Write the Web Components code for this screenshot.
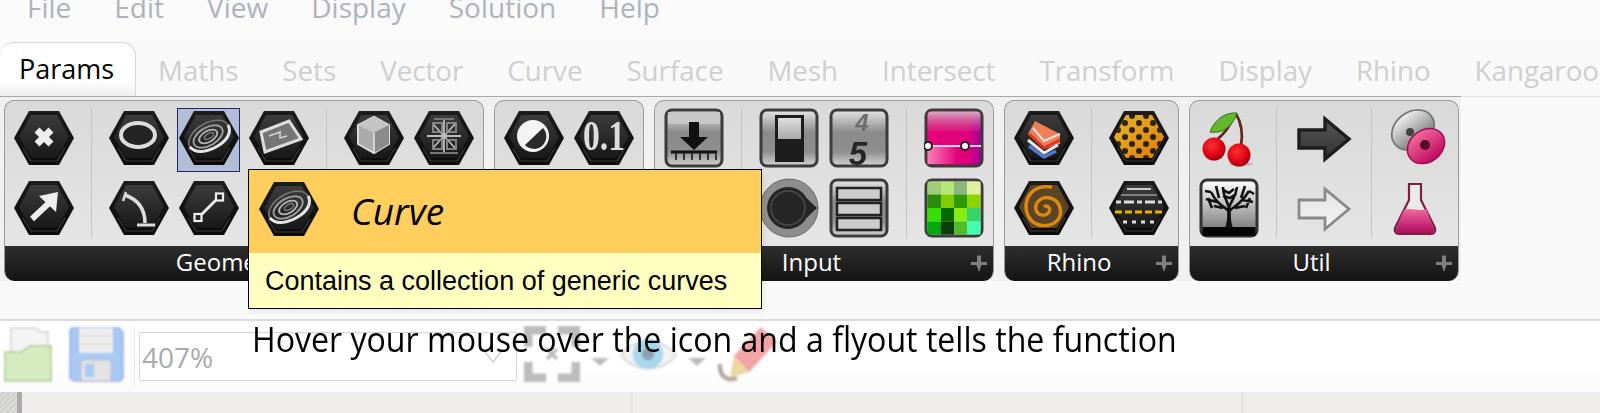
<!DOCTYPE html>
<html>
<head>
<meta charset="utf-8">
<title>Params ribbon</title>
<style>
  html, body { margin: 0; padding: 0; }
  body { width: 1600px; height: 413px; overflow: hidden; background: #f9f9f9; font-family: "Open Sans", "Liberation Sans", sans-serif; position: relative; }
</style>
</head>
<body>
<gh-menu></gh-menu>
<gh-tabs></gh-tabs>
<gh-ribbon>
  <gh-panel label="Geometry">
    <gh-group><gh-icon kind="cross"></gh-icon><gh-icon kind="arrow"></gh-icon></gh-group>
    <gh-group cols="3"><gh-icon kind="circle"></gh-icon><gh-icon kind="curve" selected></gh-icon><gh-icon kind="surface"></gh-icon><gh-icon kind="arc"></gh-icon><gh-icon kind="line"></gh-icon><gh-icon kind="blank"></gh-icon></gh-group>
    <gh-group cols="2"><gh-icon kind="cube"></gh-icon><gh-icon kind="mesh"></gh-icon></gh-group>
  </gh-panel>
  <gh-panel>
    <gh-group cols="2"><gh-icon kind="dial"></gh-icon><gh-icon kind="number"></gh-icon></gh-group>
  </gh-panel>
  <gh-panel label="Input">
    <gh-group><gh-icon kind="panel"></gh-icon></gh-group>
    <gh-group cols="2"><gh-icon kind="toggle"></gh-icon><gh-icon kind="digits"></gh-icon><gh-icon kind="knob"></gh-icon><gh-icon kind="list"></gh-icon></gh-group>
    <gh-group><gh-icon kind="gradient"></gh-icon><gh-icon kind="swatch"></gh-icon></gh-group>
  </gh-panel>
  <gh-panel label="Rhino">
    <gh-group><gh-icon kind="layers"></gh-icon><gh-icon kind="swirl"></gh-icon></gh-group>
    <gh-group><gh-icon kind="lattice"></gh-icon><gh-icon kind="dashes"></gh-icon></gh-group>
  </gh-panel>
  <gh-panel label="Util">
    <gh-group><gh-icon kind="cherry"></gh-icon><gh-icon kind="tree"></gh-icon></gh-group>
    <gh-group><gh-icon kind="darrow"></gh-icon><gh-icon kind="larrow"></gh-icon></gh-group>
    <gh-group><gh-icon kind="cell"></gh-icon><gh-icon kind="flask"></gh-icon></gh-group>
  </gh-panel>
</gh-ribbon>
<gh-toolbar></gh-toolbar>
<gh-canvas></gh-canvas>
<gh-tooltip title="Curve" text="Contains a collection of generic curves" kind="curve"></gh-tooltip>
<gh-caption>Hover your mouse over the icon and a flyout tells the function</gh-caption>

<script>
const hexBase = `
  <polygon points="0,30 15,3 45,3 60,30 45,57 15,57" fill="url(#hx)"/>
  <polygon points="5,29 17,7 43,7 55,29 43,50 17,50" fill="url(#hi)"/>
  <path d="M9 40L17 53H43L51 40" fill="none" stroke="#3c3c3c" stroke-width="1.2"/>`;
const boxBase = `
  <rect x="2" y="2" width="56" height="56" rx="6" fill="url(#bx)" stroke="#3c3c3c" stroke-width="3"/>`;

// glyphs are drawn on a 60x60 box; "hex" ones sit on the dark hexagon
const glyphs = {
  blank: '',
  cross: hexBase + '<path d="M23 22L37 36M37 22L23 36" stroke="#eee" stroke-width="7"/>',
  arrow: hexBase + '<path d="M18 41L35 25" stroke="#eee" stroke-width="6"/><polygon points="44,14 42,34 25,18" fill="#eee"/>',
  circle: hexBase + '<ellipse cx="29" cy="27" rx="17" ry="12" fill="#242424" stroke="#ddd" stroke-width="4"/>',
  curve: hexBase + `<g transform="rotate(-30 30 28)" fill="none">
      <ellipse cx="30" cy="28" rx="22" ry="13" stroke="#777" stroke-width="1.6"/>
      <path d="M8 28C10 38 22 41 32 41C44 41 52 36 52 28" stroke="#e4e4e4" stroke-width="3"/>
      <ellipse cx="29" cy="28" rx="16" ry="9" stroke="#9a9a9a" stroke-width="2"/>
      <ellipse cx="29" cy="28" rx="10" ry="5.5" stroke="#b4b4b4" stroke-width="1.8"/>
      <ellipse cx="30" cy="28" rx="5" ry="2.5" stroke="#777" stroke-width="1.6"/></g>`,
  surface: hexBase + '<polygon points="12,24 40,13 52,31 16,44" fill="#757575" stroke="#ddd" stroke-width="3"/><path d="M20 28L31 24V30L38 28" fill="none" stroke="#d4d4d4" stroke-width="1.6"/>',
  arc: hexBase + '<path d="M16 17C30 22 36 31 36 45" fill="none" stroke="#ddd" stroke-width="3.5"/><path d="M28 47H46" stroke="#ddd" stroke-width="3"/><path d="M17 14l-3 9" stroke="#ddd" stroke-width="2.4"/>',
  line: hexBase + '<path d="M20 39L39 20" stroke="#eee" stroke-width="2.8"/><rect x="15.5" y="36" width="7" height="7" fill="#222" stroke="#eee" stroke-width="2.2"/><rect x="37" y="15.5" width="7" height="7" fill="#222" stroke="#eee" stroke-width="2.2"/>',
  cube: hexBase + '<polygon points="30,9 45,17 45,36 30,45 14,36 14,17" fill="#aaa" stroke="#ddd" stroke-width="2"/><polygon points="30,9 45,17 30,25 14,17" fill="#c4c4c4"/><polygon points="30,25 45,17 45,36 30,45" fill="#8a8a8a"/><path d="M30 25V45" stroke="#e5e5e5" stroke-width="1.5"/>',
  mesh: hexBase + `<g fill="none" stroke="#bdbdbd" stroke-width="1.8">
      <path d="M19 16L41 40M41 16L19 40M30 12V44M13 28H47"/>
      <path d="M20 11H40M16 45H44" stroke="#777"/>
      <rect x="19" y="15" width="9" height="9" stroke="#8c8c8c"/><rect x="33" y="15" width="9" height="9" stroke="#8c8c8c"/>
      <rect x="19" y="32" width="9" height="9" stroke="#8c8c8c"/><rect x="33" y="32" width="9" height="9" stroke="#8c8c8c"/></g>`,
  dial: hexBase + '<circle cx="29" cy="28" r="16" fill="#f4f4f4"/><path d="M39 20A12 12 0 0 1 21 37Z" fill="#2a2a2a"/>',
  number: hexBase + '<text x="30" y="42" text-anchor="middle" font-family="Liberation Serif" font-weight="bold" font-size="42" textLength="42" lengthAdjust="spacingAndGlyphs" fill="#dcdcdc">0.1</text>',
  panel: boxBase + '<rect x="4" y="4" width="52" height="12" fill="#c8c8c8"/><path d="M25 14H35V29H44L30 42L16 29H25Z" fill="#111"/><path d="M7 44H53" stroke="#111" stroke-width="3"/><path d="M12 45V52M20 45V52M28 45V52M36 45V52M44 45V52M52 45V52" stroke="#333" stroke-width="2"/>',
  toggle: boxBase + '<rect x="16" y="7" width="29" height="47" fill="#1c1c1c"/><rect x="19" y="10" width="23" height="21" fill="url(#lt)"/>',
  digits: boxBase + '<text x="33" y="23" text-anchor="middle" font-family="Liberation Sans" font-weight="bold" font-style="italic" font-size="24" fill="#6c6c6c">4</text><text x="29" y="57" text-anchor="middle" font-family="Liberation Sans" font-weight="bold" font-style="italic" font-size="33" fill="#262626">5</text>',
  knob: '<circle cx="30" cy="30" r="29" fill="#8d8d8d" stroke="#666" stroke-width="1"/><path d="M8 30A21 21 0 1 1 30 51A21 21 0 0 1 8 30Z" fill="#262626"/><polygon points="40,13 58,30 40,47" fill="#262626"/><circle cx="29" cy="30" r="17" fill="none" stroke="#4c4c4c" stroke-width="1.5"/>',
  list: boxBase + '<rect x="8" y="10" width="44" height="12" fill="#ccc" stroke="#222" stroke-width="2.5"/><rect x="8" y="25" width="44" height="12" fill="#ccc" stroke="#222" stroke-width="2.5"/><rect x="8" y="40" width="44" height="12" fill="#ccc" stroke="#222" stroke-width="2.5"/>',
  gradient: `<rect x="2" y="2" width="56" height="56" rx="6" fill="url(#gr)" stroke="#3c3c3c" stroke-width="3"/>
      <rect x="3.5" y="3.5" width="53" height="20" rx="4" fill="url(#gs)"/>
      <rect x="3.5" y="38" width="30" height="18" fill="url(#gp)"/>
      <path d="M3 38H57" stroke="#ffd0e4" stroke-width="2"/>
      <circle cx="4" cy="38" r="4" fill="#fff" stroke="#222" stroke-width="2"/><circle cx="41" cy="38" r="4" fill="#fff" stroke="#222" stroke-width="2"/>`,
  swatch: `<rect x="2" y="2" width="56" height="56" rx="6" fill="#ddd" stroke="#3c3c3c" stroke-width="3"/>
      <g>
      <rect x="3.5" y="3.5" width="13.5" height="13" fill="#9fce77"/><rect x="17" y="3.5" width="13" height="13" fill="#b5e67a"/><rect x="30" y="3.5" width="13" height="13" fill="#8db77a"/><rect x="43" y="3.5" width="13.5" height="13" fill="#dff0a0"/>
      <rect x="3.5" y="16.5" width="13.5" height="13.5" fill="#2c8a0c"/><rect x="17" y="16.5" width="13" height="13.5" fill="#7fcc00"/><rect x="30" y="16.5" width="13" height="13.5" fill="#2c9a00"/><rect x="43" y="16.5" width="13.5" height="13.5" fill="#8ad400"/>
      <rect x="3.5" y="30" width="13.5" height="13.5" fill="#37e000"/><rect x="17" y="30" width="13" height="13.5" fill="#046a00"/><rect x="30" y="30" width="13" height="13.5" fill="#86ee10"/><rect x="43" y="30" width="13.5" height="13.5" fill="#35d36a"/>
      <rect x="3.5" y="43.5" width="13.5" height="13" fill="#00a810"/><rect x="17" y="43.5" width="13" height="13" fill="#0b3d00"/><rect x="30" y="43.5" width="13" height="13" fill="#52bb2a"/><rect x="43" y="43.5" width="13.5" height="13" fill="#45ffb0"/></g>`,
  layers: hexBase + '<polygon points="14,26 21,13 46,26 46,36 31,41" fill="#ef7f55"/><path d="M46 26L30 33L19 20" fill="none" stroke="#e2e2e2" stroke-width="2"/><path d="M46 32L30 40L15 26" fill="none" stroke="#e0341f" stroke-width="3"/><path d="M44 37L30 45L14 32" fill="none" stroke="#e8e8e8" stroke-width="3"/><path d="M42 43L30 49L15 38" fill="none" stroke="#5577cc" stroke-width="3.5"/>',
  lattice: hexBase + `<polygon points="5,29 17,7 43,7 55,29 43,50 17,50" fill="url(#or)"/>
      <polygon points="5,29 17,7 43,7 55,29 43,50 17,50" fill="url(#dots)"/>`,
  swirl: hexBase + `<polygon points="5,29 17,7 43,7 55,29 43,50 17,50" fill="#5c4526"/>
      <path d="M30 29c3-3 7 1 5 5c-3 5-11 4-13-2c-2-8 6-14 14-12c9 2 13 12 9 20c-5 9-20 10-27 3c-8-8-8-21 0-29c5-5 12-6 20-5" fill="none" stroke="#e08a0c" stroke-width="3.4"/>`,
  dashes: hexBase + `<path d="M18 11H42" stroke="#ccc" stroke-width="2"/><path d="M12 17H48" stroke="#999" stroke-width="1.5"/>
      <path d="M7 24H53" stroke="#ddd" stroke-width="2.8" stroke-dasharray="5 3 10 3"/><path d="M6 34H54" stroke="#e8b000" stroke-width="3" stroke-dasharray="7 3"/>
      <path d="M14 44H48" stroke="#ddd" stroke-width="2.8" stroke-dasharray="4 5"/>`,
  cherry: `<path d="M35 6C32 16 28 24 15 34M37 6C42 14 44 26 42 38" fill="none" stroke="#5c2a22" stroke-width="2.8"/>
      <path d="M38 5C28 4 16 10 11 24C24 26 34 18 38 5Z" fill="#63b82b" stroke="#2f6e10" stroke-width="1"/>
      <ellipse cx="42" cy="56" rx="12" ry="2" fill="#bbb"/>
      <circle cx="15" cy="41" r="11.5" fill="url(#ch)"/><circle cx="40" cy="47" r="11.5" fill="url(#ch)"/>`,
  tree: `<rect x="2" y="2" width="56" height="56" rx="6" fill="url(#tr)" stroke="#333" stroke-width="3"/>
      <rect x="3.5" y="49" width="53" height="9" fill="#050505"/>
      <path d="M26 50C29 42 28 36 28 30H32C32 36 31 42 34 50Z" fill="#111"/>
      <g fill="none" stroke="#111" stroke-width="2.6"><path d="M30 33C24 28 18 26 12 14M30 33C36 28 42 26 50 13M30 30C28 22 24 18 24 9M30 30C32 22 37 20 38 9M18 24L7 21M44 22L54 24M20 20L17 8M42 20L46 8M24 18L31 20L37 16M15 28L24 30M46 28L36 30M12 14L6 13M50 13L55 16M24 12L30 15L35 11M9 20L13 30M51 20L47 30"/></g>`,
  darrow: '<polygon points="5,22 31,22 31,11 55,31 31,51 31,40 5,40" fill="url(#da)" stroke="#1e1e1e" stroke-width="3.4"/>',
  larrow: '<polygon points="5,22 31,22 31,11 55,31 31,51 31,40 5,40" fill="url(#la)" stroke="#8a8a8a" stroke-width="2.8"/>',
  cell: `<ellipse cx="24" cy="22" rx="23" ry="18" transform="rotate(-38 24 22)" fill="url(#ce)" stroke="#777" stroke-width="1.8"/>
      <circle cx="21" cy="24" r="4" fill="#444"/>
      <ellipse cx="37" cy="38" rx="20" ry="16" transform="rotate(-38 37 38)" fill="url(#cp)" stroke="#a01050" stroke-width="1.5"/>
      <circle cx="36" cy="37" r="5" fill="#5c0828"/>`,
  flask: `<path d="M20 6H32V22L46 50C47 54 45 56 41 56H11C7 56 5 54 6 50L20 22Z" fill="#eaeaea" stroke="#7a2040" stroke-width="2.2"/>
      <path d="M15 32C22 29 30 34 37 31L45 50C46 53 44 55 41 55H11C8 55 6 53 7 50Z" fill="url(#fl)"/>`
};

const defs = `<defs>
  <linearGradient id="hx" x1="0" y1="0" x2="0" y2="1"><stop offset="0" stop-color="#1c1c1c"/><stop offset="1" stop-color="#0a0a0a"/></linearGradient>
  <linearGradient id="hi" x1="0" y1="0" x2="0" y2="1"><stop offset="0" stop-color="#3c3c3c"/><stop offset="1" stop-color="#181818"/></linearGradient>
  <linearGradient id="bx" x1="0" y1="0" x2="0" y2="1"><stop offset="0" stop-color="#e6e6e6"/><stop offset=".4" stop-color="#8a8a8a"/><stop offset=".75" stop-color="#8f8f8f"/><stop offset="1" stop-color="#d4d4d4"/></linearGradient>
  <linearGradient id="lt" x1="0" y1="0" x2="0" y2="1"><stop offset="0" stop-color="#ddd"/><stop offset="1" stop-color="#aaa"/></linearGradient>
  <linearGradient id="gr" x1="0" y1="0" x2="1" y2="0"><stop offset="0" stop-color="#e80078"/><stop offset=".75" stop-color="#e0007a"/><stop offset="1" stop-color="#a000a0"/></linearGradient>
  <linearGradient id="gs" x1="0" y1="0" x2="0" y2="1"><stop offset="0" stop-color="#d6b8c6" stop-opacity=".95"/><stop offset="1" stop-color="#c85a90" stop-opacity=".2"/></linearGradient>
  <linearGradient id="gp" x1="0" y1="0" x2="1" y2="0"><stop offset="0" stop-color="#ff80bc"/><stop offset="1" stop-color="#ff80bc" stop-opacity="0"/></linearGradient>
  <linearGradient id="or" x1="0" y1="0" x2="1" y2="1"><stop offset="0" stop-color="#e6b820"/><stop offset="1" stop-color="#e07a08"/></linearGradient>
  <pattern id="dots" width="14" height="14" patternUnits="userSpaceOnUse" patternTransform="translate(2 1)"><circle cx="0" cy="0" r="3" fill="#2a2214"/><circle cx="14" cy="0" r="3" fill="#2a2214"/><circle cx="0" cy="14" r="3" fill="#2a2214"/><circle cx="14" cy="14" r="3" fill="#2a2214"/><circle cx="7" cy="7" r="3" fill="#2a2214"/></pattern>
  <radialGradient id="ch" cx=".4" cy=".35" r=".7"><stop offset="0" stop-color="#ff3030"/><stop offset=".7" stop-color="#d80010"/><stop offset="1" stop-color="#900008"/></radialGradient>
  <linearGradient id="tr" x1="0" y1="0" x2="0" y2="1"><stop offset="0" stop-color="#fff"/><stop offset="1" stop-color="#6c6c6c"/></linearGradient>
  <linearGradient id="da" x1="0" y1="0" x2="0" y2="1"><stop offset="0" stop-color="#555"/><stop offset="1" stop-color="#333"/></linearGradient>
  <linearGradient id="la" x1="0" y1="0" x2="0" y2="1"><stop offset="0" stop-color="#e4e4e4"/><stop offset="1" stop-color="#f4f4f4"/></linearGradient>
  <linearGradient id="ce" x1="0" y1="0" x2="0" y2="1"><stop offset="0" stop-color="#f0f0f0"/><stop offset="1" stop-color="#6e6e6e"/></linearGradient>
  <linearGradient id="cp" x1="0" y1="0" x2="0" y2="1"><stop offset="0" stop-color="#f06aa0"/><stop offset="1" stop-color="#c00a5e"/></linearGradient>
  <linearGradient id="fl" x1="0" y1="0" x2="0" y2="1"><stop offset="0" stop-color="#f06aa0"/><stop offset="1" stop-color="#b00a60"/></linearGradient>
</defs>`;

class GhIcon extends HTMLElement {
  connectedCallback() {
    if (this.shadowRoot) return;
    this.attachShadow({ mode: 'open' });
    const kind = this.getAttribute('kind');
    this.shadowRoot.innerHTML = `
      <style>
        :host { display: block; width: 60px; height: 60px; position: relative; }
        :host([selected])::before { content: ""; position: absolute; left: -2px; right: -1px; top: 0; bottom: -4px; background: #b4bdd6; border: 1px solid #1c2a6e; box-sizing: border-box; }
        svg { display: block; position: relative; filter: blur(.7px); }
      </style>
      <svg width="60" height="60" viewBox="0 0 60 60" xmlns="http://www.w3.org/2000/svg">${defs}${glyphs[kind] || ''}</svg>`;
  }
}

class GhMenu extends HTMLElement {
  connectedCallback() {
    this.attachShadow({ mode: 'open' });
    const items = ['File', 'Edit', 'View', 'Display', 'Solution', 'Help'];
    this.shadowRoot.innerHTML = `
      <style>
        :host { display: flex; height: 42px; overflow: hidden; padding-left: 27px; gap: 43px; background: #fafafa; font-size: 28px; line-height: 28px; color: #adb3bd; }
        span { display: block; margin-top: -7px; }
      </style>
      ${items.map(t => `<span>${t}</span>`).join('')}`;
  }
}

class GhTabs extends HTMLElement {
  connectedCallback() {
    this.attachShadow({ mode: 'open' });
    const items = ['Maths', 'Sets', 'Vector', 'Curve', 'Surface', 'Mesh', 'Intersect', 'Transform', 'Display', 'Rhino', 'Kangaroo'];
    this.shadowRoot.innerHTML = `
      <style>
        :host { display: flex; height: 54px; overflow: hidden; font-size: 27.7px; line-height: 34px; color: #cfcfcf; white-space: nowrap; }
        .on { box-sizing: border-box; width: 136px; height: 54px; padding: 9px 0 0 19px; font-size: 27px; color: #000; background: linear-gradient(#fff 70%, #eee); border: 1px solid #d8d8d8; border-bottom: 0; border-left: 0; border-radius: 14px 14px 0 0; flex: none; }
        .tab { padding: 11px 22px 0; flex: none; }
        .tab:first-of-type { margin-left: 1px; }
      </style>
      <div class="on">Params</div>
      ${items.map(t => `<div class="tab">${t}</div>`).join('')}`;
  }
}

class GhRibbon extends HTMLElement {
  connectedCallback() {
    this.attachShadow({ mode: 'open' });
    this.shadowRoot.innerHTML = `
      <style>
        :host { display: block; background: linear-gradient(#e4e4e4, #e4e4e4) top / 100% 1px no-repeat; }
        .in { box-sizing: border-box; width: 1461px; height: 185px; padding: 3px 0 0 4px; border-top: 1px solid #a8a8a8; background: #f0f0f0; display: flex; gap: 10px; }
      </style>
      <div class="in"><slot></slot></div>`;
  }
}

class GhPanel extends HTMLElement {
  connectedCallback() {
    this.attachShadow({ mode: 'open' });
    this.shadowRoot.innerHTML = `
      <style>
        :host { display: flex; flex-direction: column; height: 181px; flex: none; box-sizing: border-box; border: 1px solid #9a9a9a; border-radius: 10px; overflow: hidden; background: linear-gradient(#d9d9d9, #e8e8e8); border-bottom: 0; }
        .body { display: flex; height: 145px; padding: 7px 9px 0; box-sizing: border-box; }
        .foot { height: 35px; display: flex; align-items: center; color: #fff; font-size: 24px; line-height: 30px; background: linear-gradient(#2e2e2e, #141414); margin: 0 -1px; }
        .foot span { flex: 1; text-align: center; padding: 0 0 3px 2px; }
        .foot svg { width: 27px; flex: none; display: block; filter: blur(.5px); }
        ::slotted(gh-group:not(:first-child)) { margin-left: 17px; }
        ::slotted(gh-group:not(:last-child)) { padding-right: 17px; border-right: 1px solid #c4c4c4; }
      </style>
      <div class="body"><slot></slot></div>
      <div class="foot"><span>${this.getAttribute('label') || ''}</span>
        <svg height="20" viewBox="0 0 27 20"><path d="M10 1.5H14V8H20V11H14.5L12 18L9.5 11H4V8H10Z" fill="#808080"/></svg>
      </div>`;
  }
}

class GhGroup extends HTMLElement {
  connectedCallback() {
    this.attachShadow({ mode: 'open' });
    const cols = this.getAttribute('cols') || 1;
    this.shadowRoot.innerHTML = `
      <style>
        :host { display: block; height: 130px; }
        div { display: grid; grid-template-columns: repeat(${cols}, 60px); grid-auto-rows: 60px; gap: 10px; }
      </style>
      <div><slot></slot></div>`;
  }
}

class GhToolbar extends HTMLElement {
  connectedCallback() {
    this.attachShadow({ mode: 'open' });
    this.shadowRoot.innerHTML = `
      <style>
        :host { display: flex; align-items: flex-start; box-sizing: border-box; height: 73px; margin-top: 38px; border-top: 2px solid #dcdcdc; background: linear-gradient(#fff 60%, #fafafa); padding: 5px 0 0 4px; }
        svg { display: block; flex: none; filter: blur(.8px); }
        .sep { width: 1px; height: 60px; background: #e8e8e8; margin: 0 4px 0 10px; flex: none; }
        .combo { box-sizing: border-box; width: 378px; height: 49px; margin-top: 6px; border: 1px solid #d6d6d6; border-radius: 2px; background: #fff; display: flex; align-items: center; justify-content: space-between; padding: 0 14px 0 2px; color: #aaa; font-size: 28px; flex: none; }
        .combo svg { filter: none; }
      </style>
      <svg width="49" height="57" viewBox="0 0 49 57" style="margin-right:16px">
        <path d="M7 2H32L37 6H44V30H7Z" fill="#f4f4f4" stroke="#d0d0d0" stroke-width="1.5"/>
        <path d="M1 26L17 26L26 20H47V55H1Z" fill="#d6ebc0" stroke="#a9cc9c" stroke-width="1.5"/>
      </svg>
      <svg width="55" height="57" viewBox="0 0 55 57">
        <path d="M3 2H50L54 6V52L51 55H5L1 52V4Z" fill="#a8c8f5" stroke="#95b2e2" stroke-width="1.5"/>
        <rect x="10" y="2" width="34" height="25" fill="#ededed"/>
        <path d="M12 10H42M12 18H42" stroke="#dcdcdc" stroke-width="1.5"/>
        <rect x="12" y="34" width="30" height="21" fill="#e4e4e4" stroke="#bbb"/>
        <rect x="16" y="38" width="9" height="13" fill="#a8c8f5"/>
      </svg>
      <div class="sep"></div>
      <div class="combo">407%
        <svg width="18" height="12" viewBox="0 0 18 12"><path d="M1 1L9 11L17 1" fill="none" stroke="#cfcfcf" stroke-width="1.5"/></svg>
      </div>
      <svg width="56" height="56" viewBox="0 0 56 56" style="margin-left:7px">
        <path d="M4 21V4H22M34 4H52V21M4 36V52H22M34 52H52V36" fill="none" stroke="#bcbcbc" stroke-width="9"/>
        <path d="M23 23L33 33M33 23L23 33" stroke="#bcbcbc" stroke-width="3.5"/>
      </svg>
      <svg width="20" height="10" viewBox="0 0 20 10" style="margin:31px 10px 0 10px"><polygon points="1,1 19,1 10,9" fill="#bdbdbd"/></svg>
      <svg width="57" height="44" viewBox="0 0 57 44" style="margin-top:7px">
        <path d="M1 22C13 4 44 4 56 22C44 40 13 40 1 22Z" fill="#f3f3f3" stroke="#d8d8d8" stroke-width="2"/>
        <circle cx="28" cy="21" r="15" fill="#a8d6ea"/><circle cx="28" cy="21" r="6" fill="#8aa0ae"/>
      </svg>
      <svg width="20" height="10" viewBox="0 0 20 10" style="margin:31px 10px 0 10px"><polygon points="1,1 19,1 10,9" fill="#bdbdbd"/></svg>
      <svg width="60" height="60" viewBox="0 0 60 60">
        <path d="M3 38C2 50 10 56 20 52" fill="none" stroke="#b8a8a4" stroke-width="4.5"/>
        <polygon points="44,1 60,16 32,46 17,30" fill="#f2a3a8"/>
        <polygon points="17,30 32,46 13,52" fill="#ead9a0"/>
      </svg>`;
  }
}

class GhCanvas extends HTMLElement {
  connectedCallback() {
    this.attachShadow({ mode: 'open' });
    this.shadowRoot.innerHTML = `
      <style>
        :host { display: flex; height: 21px; background: #efeeea; }
        .hatch { width: 17px; background: repeating-linear-gradient(135deg, #dcdcd8 0 2px, #cfcfcb 2px 4px); flex: none; }
        .bar { width: 5px; background: #a9a9a9; flex: none; }
        .rule { width: 3px; background: #e6e6e2; flex: none; }
        .a { width: 608px; flex: none; }
        .b { width: 608px; flex: none; }
      </style>
      <div class="hatch"></div><div class="bar"></div>
      <div class="a"></div><div class="rule"></div>
      <div class="b"></div><div class="rule"></div>`;
  }
}

class GhTooltip extends HTMLElement {
  connectedCallback() {
    this.attachShadow({ mode: 'open' });
    this.shadowRoot.innerHTML = `
      <style>
        :host { position: absolute; left: 248px; top: 169px; width: 514px; box-sizing: border-box; border: 1px solid #000; box-shadow: 2px 4px 4px rgba(0,0,0,.06); color: #000; }
        .head { height: 83px; background: #ffce5c; display: flex; align-items: flex-start; padding: 9px 0 0 10px; box-sizing: border-box; }
        .name { font-style: italic; font-size: 37px; line-height: 48px; margin: 8px 0 0 32px; }
        .text { height: 55px; box-sizing: border-box; background: #ffffc0; padding: 12px 0 0 16px; font: 27px/32px "Liberation Sans", sans-serif; white-space: nowrap; }
      </style>
      <div class="head"><gh-icon kind="${this.getAttribute('kind')}"></gh-icon><div class="name">${this.getAttribute('title')}</div></div>
      <div class="text">${this.getAttribute('text')}</div>`;
  }
}

class GhCaption extends HTMLElement {
  connectedCallback() {
    this.attachShadow({ mode: 'open' });
    this.shadowRoot.innerHTML = `
      <style>
        :host { position: absolute; left: 252px; top: 316px; font-size: 34px; line-height: 46px; color: #000; white-space: nowrap; transform: scaleX(.944); transform-origin: left top; }
      </style>
      <slot></slot>`;
  }
}

customElements.define('gh-icon', GhIcon);
customElements.define('gh-menu', GhMenu);
customElements.define('gh-tabs', GhTabs);
customElements.define('gh-ribbon', GhRibbon);
customElements.define('gh-panel', GhPanel);
customElements.define('gh-group', GhGroup);
customElements.define('gh-toolbar', GhToolbar);
customElements.define('gh-canvas', GhCanvas);
customElements.define('gh-tooltip', GhTooltip);
customElements.define('gh-caption', GhCaption);
</script>
</body>
</html>
